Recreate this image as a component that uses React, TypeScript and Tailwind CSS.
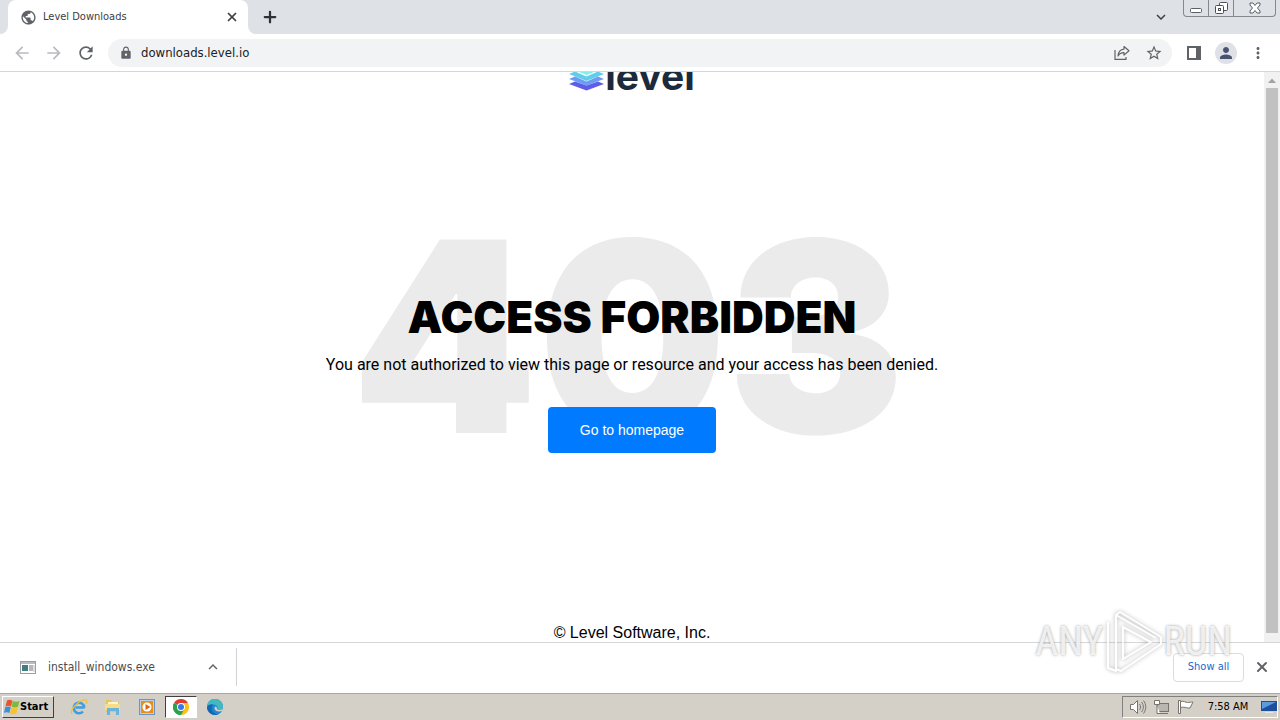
import type { ReactNode } from 'react'
import { Plus, X } from 'lucide-react'
import {
  MdArrowBack,
  MdArrowForward,
  MdExpandLess,
  MdExpandMore,
  MdLock,
  MdMoreVert,
  MdPerson,
  MdPublic,
  MdRefresh,
  MdStarBorder,
} from 'react-icons/md'

function IconButton({ label, children }: { label: string; children: ReactNode }) {
  return (
    <button aria-label={label} className="flex size-8 shrink-0 items-center justify-center text-[#5f6368]">
      {children}
    </button>
  )
}

function ShareIcon() {
  return (
    <svg width="16" height="16" viewBox="0 0 16 16" fill="none" stroke="#5f6368" strokeWidth="1.2">
      <path d="M1 5v9.3h11V12" />
      <path d="M10 1.500l5 4.300-5 4.300V7.700C7.500 7.600 5.500 8.500 4 11c.3-4 2.500-6.500 6-6.900z" strokeLinejoin="round" />
    </svg>
  )
}

function SidePanelIcon() {
  return (
    <svg width="14" height="14" viewBox="0 0 14 14">
      <path d="M0 0h14v14H0z" fill="#5f6368" />
      <path d="M2 2h7v10H2z" fill="#fff" />
    </svg>
  )
}

function WindowControls() {
  return (
    <div className="flex h-[17px] w-[93px] shrink-0 self-start overflow-hidden rounded-b border border-t-0 border-[#85888d]">
      <button aria-label="Minimize" className="flex w-[25px] items-center justify-center border-r border-[#85888d]">
        <svg width="12" height="16" viewBox="0 0 12 16">
          <rect x="0.500" y="8.500" width="11" height="4" rx="1" fill="#fff" stroke="#5b5f66" />
        </svg>
      </button>
      <button aria-label="Restore" className="flex w-[25px] items-center justify-center border-r border-[#85888d]">
        <svg width="13" height="14" viewBox="0 0 13 14" fill="#fff" stroke="#4b4f56">
          <rect x="4.500" y="1.500" width="8" height="8" rx="1" />
          <rect x="0.500" y="4.500" width="8" height="8" rx="1" />
          <rect x="3.500" y="7.500" width="2" height="2" />
        </svg>
      </button>
      <button aria-label="Close" className="flex flex-1 items-center justify-center">
        <svg width="12" height="12" viewBox="0 0 12 12">
          <path
            d="M1 1h3l2 2.500L8 1h3v2L8.500 6 11 9v2H8L6 8.500 4 11H1V9l2.500-3L1 3z"
            fill="#fff"
            stroke="#5b5f66"
          />
        </svg>
      </button>
    </div>
  )
}

function TabStrip() {
  return (
    <div className="flex h-[34px] shrink-0 bg-[#dee1e6]">
      <div className="size-2 self-end bg-white">
        <div className="size-2 rounded-br-lg bg-[#dee1e6]" />
      </div>
      <div className="flex w-60 items-center rounded-t-lg bg-white pl-3 pr-2">
        <MdPublic size={17} color="#5f6368" />
        <span className="flex-1 pl-[6px] text-[11px] text-[#3c4043]">Level Downloads</span>
        <button aria-label="Close tab" className="flex size-4 items-center justify-center text-[#3c4043]">
          <X size={14} strokeWidth={3} />
        </button>
      </div>
      <div className="size-2 self-end bg-white">
        <div className="size-2 rounded-bl-lg bg-[#dee1e6]" />
      </div>
      <button aria-label="New tab" className="flex w-7 items-center justify-center text-[#2f3136]">
        <Plus size={18} strokeWidth={3} />
      </button>
      <div className="flex-1" />
      <button aria-label="Search tabs" className="mr-[10px] flex w-6 items-center justify-center text-[#3c4043]">
        <MdExpandMore size={18} />
      </button>
      <WindowControls />
      <div className="w-1" />
    </div>
  )
}

function Toolbar() {
  return (
    <div className="flex h-[38px] shrink-0 items-center border-b border-[#d5d6d9] bg-white px-[6px]">
      <div className="flex text-[#b9bbbe]">
        <button aria-label="Back" className="flex size-8 items-center justify-center">
          <MdArrowBack size={20} />
        </button>
        <button aria-label="Forward" className="flex size-8 items-center justify-center">
          <MdArrowForward size={20} />
        </button>
        <IconButton label="Reload">
          <MdRefresh size={20} />
        </IconButton>
      </div>
      <div className="ml-[6px] flex h-7 flex-1 items-center rounded-full bg-[#f1f3f4] pl-[11px]">
        <MdLock size={14} color="#5f6368" />
        <input
          aria-label="Address"
          defaultValue="downloads.level.io"
          className="min-w-0 flex-1 bg-transparent pl-2 text-[13px] text-[#202124] outline-none"
        />
        <IconButton label="Share">
          <ShareIcon />
        </IconButton>
        <IconButton label="Bookmark">
          <MdStarBorder size={18} />
        </IconButton>
        <div className="w-[2px]" />
      </div>
      <div className="ml-[6px] flex">
        <IconButton label="Side panel">
          <SidePanelIcon />
        </IconButton>
        <IconButton label="Profile">
          <span className="flex size-[22px] items-center justify-center rounded-full bg-[#dee1e6] text-[#4a5470]">
            <MdPerson size={18} />
          </span>
        </IconButton>
        <IconButton label="Menu">
          <MdMoreVert size={18} />
        </IconButton>
      </div>
    </div>
  )
}

function LevelMark() {
  return (
    <svg width="36" height="36" viewBox="0 1 36 36">
      <path d="M0 13l17.500-7L35 13l-17.500 7z" fill="#7ff0ee" />
      <path d="M0 19l6-2.500 11.500 5 11.500-5 6 2.500-17.500 7z" fill="#62cdea" />
      <path d="M0 24l6-2.500 11.500 5 11.500-5 6 2.500-17.500 6.500z" fill="#6a9df2" />
      <path d="M0 29l6-2.500 11.500 4 11.500-4 6 2.500-17.500 6.500z" fill="#5f5de8" />
    </svg>
  )
}

function Page() {
  return (
    <div className="flex min-w-0 flex-1 flex-col overflow-hidden font-['Inter',sans-serif] text-black">
      <header className="flex h-5 shrink-0 items-end justify-center overflow-hidden">
        <div className="flex items-end">
          <LevelMark />
          <span className="text-[39px] leading-8 font-bold text-[#1c2a3d]">level</span>
        </div>
      </header>
      <main className="relative flex flex-1 flex-col items-center justify-center pt-[30px]">
        <div
          aria-hidden="true"
          className="absolute inset-0 flex items-center justify-center pr-2 pb-11 text-[266px] leading-none font-black text-[#ebebeb]"
        >
          403
        </div>
        <h1 className="relative text-[44px] leading-[48px] font-black">ACCESS FORBIDDEN</h1>
        <p className="relative mt-3 font-['Roboto',sans-serif] text-[16px] leading-6">
          You are not authorized to view this page or resource and your access has been denied.
        </p>
        <a
          href="#"
          className="relative mt-[30px] rounded bg-[#007aff] px-8 py-3 font-['Liberation_Sans',sans-serif] text-[14px] leading-[22px] text-white"
        >
          Go to homepage
        </a>
      </main>
      <footer className="shrink-0 text-center font-['Liberation_Sans',sans-serif] text-[16px] leading-[18px]">
        © Level Software, Inc.
      </footer>
    </div>
  )
}

function Scrollbar() {
  return (
    <div className="flex w-4 shrink-0 flex-col items-center bg-[#f1f1f1]">
      <svg width="8" height="16" viewBox="0 0 8 16">
        <path d="M0 11l4-4.500L8 11z" fill="#a3a3a3" />
      </svg>
      <div className="mb-[9px] w-3 flex-1 bg-[#c1c1c1]" />
    </div>
  )
}

function DownloadBar() {
  return (
    <div className="flex h-[51px] shrink-0 items-center border-t border-[#d5d6d9] bg-white pr-[10px] pb-[2px] pl-5">
      <svg width="16" height="13" viewBox="0 0 16 13">
        <rect x="0.500" y="0.500" width="15" height="12" fill="#fff" stroke="#9a9da1" />
        <path d="M1 1h14v2H1z" fill="#b9bcc0" />
        <path d="M2 4h6v6H2z" fill="#3f7f82" />
        <path d="M9 5h4M9 7h4M9 9h4" stroke="#6b7075" />
        <path d="M14 4v7" stroke="#b9bcc0" />
      </svg>
      <span className="w-[168px] pl-3 text-[12px] text-[#4a4d51]">install_windows.exe</span>
      <button aria-label="Download options" className="text-[#5f6368]">
        <MdExpandLess size={18} />
      </button>
      <div className="ml-[14px] h-[38px] w-px bg-[#d0d2d5]" />
      <div className="flex-1" />
      <button className="h-[29px] w-[71px] rounded border border-[#dadce0] text-[11px] text-[#1a67d2]">
        Show all
      </button>
      <button aria-label="Close downloads bar" className="ml-[10px] text-[#5f6368]">
        <X size={16} strokeWidth={3} />
      </button>
    </div>
  )
}

function WindowsFlag() {
  return (
    <svg width="16" height="16" viewBox="0 0 16 16">
      <path d="M3 1.500c2-1 3.500-.8 5.500.2L7 7.500c-1.600-1-3.500-1-5.500-.2z" fill="#e8562a" />
      <path d="M9 2c2 1 4 1 6.500 0L14 7.800c-2 .9-4.500 .9-6.500-.1z" fill="#7fb93c" />
      <path d="M1.300 8c2-.8 3.900-.8 5.500.2L5.300 14c-1.600-1-3.500-1-5.300-.2z" fill="#3f8fd8" />
      <path d="M7.400 8.500c1.800 1 4.300 1 6.500.1L12.300 14.500c-2 .9-4.500 .9-6.400-.1z" fill="#f7c32c" />
    </svg>
  )
}

function ExplorerIcon() {
  return (
    <svg width="18" height="18" viewBox="0 0 18 18" fill="none">
      <path d="M14.500 9.500H5.500M14.300 9.500a5.300 5.300 0 1 0-1.300 4" stroke="#3e9fe0" strokeWidth="2.600" />
      <path d="M2 16C-1 12 10 1 16 2c1.500.5.8 2.500 0 4" stroke="#eebf3f" strokeWidth="1.300" />
    </svg>
  )
}

function FolderIcon() {
  return (
    <svg width="18" height="18" viewBox="0 0 18 18">
      <path d="M2 2h5l1 2h7v10H2z" fill="#e9c45c" />
      <path d="M4 4h10v4H4z" fill="#fff6cf" />
      <path d="M1 6h15v6H1z" fill="#f6dd8a" />
      <path d="M3 10h12v7h-3v-4H6v4H3z" fill="#69b4dc" />
    </svg>
  )
}

function MediaIcon() {
  return (
    <svg width="16" height="16" viewBox="0 0 16 16">
      <rect x="0.500" y="0.500" width="15" height="15" fill="#b7d3ec" stroke="#6b95bd" />
      <rect x="2" y="2" width="12" height="12" fill="#f08a1d" />
      <circle cx="8" cy="8" r="4.500" fill="#fff" />
      <path d="M6.500 5l5 3-5 3z" fill="#e0640c" />
    </svg>
  )
}

function ChromeIcon() {
  return (
    <svg width="16" height="16" viewBox="0 0 16 16">
      <path d="M8 8L1.070 4A8 8 0 0 1 14.930 4z" fill="#e33b2e" />
      <path d="M8 8l6.930-4A8 8 0 0 1 8 16z" fill="#fbc116" />
      <path d="M8 8v8A8 8 0 0 1 1.070 4z" fill="#2ba24c" />
      <path d="M8 4h6.930L11.460 10 8 16 8 8z" fill="#fbc116" />
      <path d="M1.070 4l3.470 6L8 12l3.460-2L8 16A8 8 0 0 1 1.070 4z" fill="#2ba24c" />
      <circle cx="8" cy="8" r="4" fill="#fff" />
      <circle cx="8" cy="8" r="3" fill="#3b78e7" />
    </svg>
  )
}

function EdgeIcon() {
  return (
    <svg width="16" height="16" viewBox="0 0 16 16">
      <circle cx="8" cy="8" r="8" fill="#1c86d1" />
      <path d="M0 8a8 8 0 0 1 16-.5c0 2.500-2 3.800-4 3.800-1.500 0-2-.6-1.500-1.500C11 7 9 5.500 6.500 5.500 3.500 5.500 1 6.500 0 8z" fill="#43b8c0" />
      <path d="M0 8c1-2 3.500-3 6-2.500C4 7 4 11 6.500 13.500c1.500 1.300 3 1.800 4.500 1.900A8 8 0 0 1 0 8z" fill="#1565b5" />
      <path d="M8 7.500c-1.500 2 .5 5 3.500 5 1.500 0 3-.3 3.800-1l.6-2c-1 1.500-5 2.300-5.900.5.5-1-.5-2.500-2-2.500z" fill="#d4d0c8" />
    </svg>
  )
}

function TrayIcons() {
  return (
    <svg width="66" height="18" viewBox="0 0 66 18" fill="#fff" stroke="#77746f">
      <path d="M1.500 6.500h3l4-4v13l-4-4h-3z" />
      <path d="M10.500 6c1.500 2 1.500 4 0 6M12.500 4c2.500 3 2.500 7 0 10M14.500 2.500c3 4 3 9 0 13" fill="none" />
      <rect x="28.500" y="5.500" width="11" height="8" fill="#b9b6b0" />
      <path d="M30 15.500h9M25.500 2.500h5v4h-5zM28 7v8.500h3" />
      <path d="M49.500 2.500h2v13h-2z" />
      <path d="M51.500 3.500c3-1 5 1 7 1s3-.5 5.500-.5l-3 6c-3 .5-4-1.500-9.500-.5z" />
    </svg>
  )
}

const pinned = [
  { name: 'Internet Explorer', icon: <ExplorerIcon /> },
  { name: 'File Explorer', icon: <FolderIcon /> },
  { name: 'Media Player', icon: <MediaIcon /> },
  { name: 'Google Chrome', icon: <ChromeIcon />, active: true },
  { name: 'Microsoft Edge', icon: <EdgeIcon /> },
]

function Taskbar() {
  return (
    <div className="flex h-[27px] shrink-0 items-center border-t border-[#aaa8a2] bg-[#d4d0c8] px-[2px]">
      <button className="flex h-[22px] w-[52px] items-center border border-t-white border-r-[#404040] border-b-[#404040] border-l-white pl-px text-[11px] font-bold text-black">
        <WindowsFlag />
        Start
      </button>
      <div className="ml-[9px] flex gap-[2px]">
        {pinned.map((app) => (
          <button
            key={app.name}
            aria-label={app.name}
            className={
              app.active
                ? 'flex h-[22px] w-8 items-center justify-center border border-t-[#404040] border-r-white border-b-white border-l-[#404040] bg-white'
                : 'flex h-[22px] w-8 items-center justify-center'
            }
          >
            {app.icon}
          </button>
        ))}
      </div>
      <div className="flex-1" />
      <div className="flex h-[22px] w-[156px] items-center border border-t-[#808080] border-r-white border-b-white border-l-[#808080] pl-[6px] text-[11px] text-black">
        <TrayIcons />
        <span className="flex-1 text-center whitespace-nowrap">7:58 AM</span>
        <svg width="16" height="14" viewBox="0 0 16 14">
          <path d="M0 1h16v10H0z" fill="#1d4f9e" />
          <path d="M1 2h14L1 9z" fill="#5c9be0" />
          <path d="M4 12h8v1H4z" fill="#e9e7e2" />
        </svg>
      </div>
    </div>
  )
}

function Watermark() {
  return (
    <div className="pointer-events-none absolute right-12 bottom-[46px] flex items-center font-['Liberation_Sans_Narrow','Roboto_Condensed',sans-serif] text-[40px] leading-none text-white/80 [text-shadow:0_0_3px_#999]">
      <span>ANY</span>
      <svg
        width="60"
        height="64"
        viewBox="0 0 60 64"
        fill="none"
        stroke="#fff"
        strokeWidth="2"
        className="opacity-80 drop-shadow-[0_0_2px_#999]"
      >
        <path d="M4 12v46l8 3V5l40 23M12 5l4-3 41 25v7L17 61l-5-2" strokeLinejoin="round" />
        <path d="M19 17v32l28-17z" />
      </svg>
      <span>RUN</span>
    </div>
  )
}

export default function App() {
  return (
    <div className="relative flex h-screen flex-col overflow-hidden bg-white font-['DejaVu_Sans_Condensed','DejaVu_Sans',sans-serif]">
      <TabStrip />
      <Toolbar />
      <div className="flex min-h-0 flex-1">
        <Page />
        <Scrollbar />
      </div>
      <DownloadBar />
      <Taskbar />
      <Watermark />
    </div>
  )
}
